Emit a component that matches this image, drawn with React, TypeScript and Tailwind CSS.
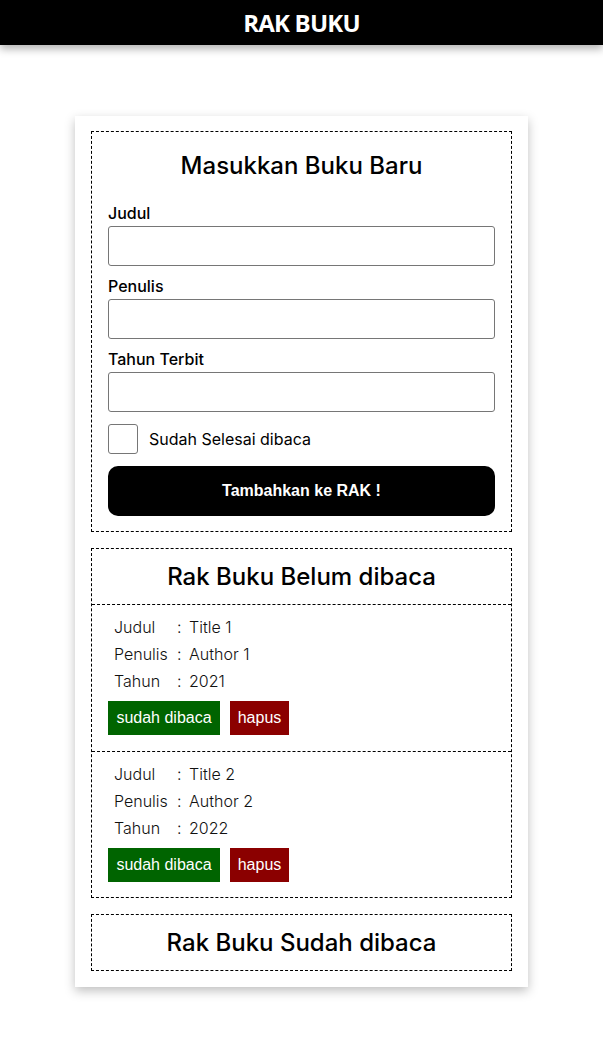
import React from "react";

const books = [
  { title: "Title 1", author: "Author 1", year: "2021" },
  { title: "Title 2", author: "Author 2", year: "2022" },
];

function Field({ label }: { label: string }) {
  return (
    <div className="flex flex-col">
      <label className="text-[16px] leading-[24px] font-medium">{label}</label>
      <input
        type="text"
        className="mt-px h-10 w-full rounded-[3px] border border-[#767676] bg-white px-2"
      />
    </div>
  );
}

function BookItem({ title, author, year }: { title: string; author: string; year: string }) {
  const rows: [string, string][] = [
    ["Judul", title],
    ["Penulis", author],
    ["Tahun", year],
  ];
  return (
    <div className="border-t border-dashed border-black px-4 pt-[8px] pb-4 last:pb-[15px]">
      <div className="pl-[6px]">
        {rows.map(([k, v]) => (
          <div key={k} className="flex h-[27px] items-center text-[16px] font-light text-[#111]">
            <span className="w-[63px]">{k}</span>
            <span className="w-3">:</span>
            <span>{v}</span>
          </div>
        ))}
      </div>
      <div className="mt-[7px] flex gap-[10px] font-['Liberation_Sans',Arial,sans-serif] text-[16px] text-white">
        <button className="flex h-[34px] w-[112px] items-center justify-center bg-[#006400]">sudah dibaca</button>
        <button className="flex h-[34px] w-[59px] items-center justify-center bg-[#8b0000]">hapus</button>
      </div>
    </div>
  );
}

export default function App() {
  return (
    <div className="min-h-[1057px] bg-white font-['Inter','Noto_Sans',sans-serif] text-black">
      <header className="flex h-[45px] items-center justify-center bg-black shadow-[0_4px_8px_rgba(0,0,0,0.3)]">
        <h1 className="font-['Open_Sans',sans-serif] text-[24px] font-bold tracking-[-0.8px] text-white">RAK BUKU</h1>
      </header>

      <main className="flex justify-center pt-[71px] pb-[70px]">
        <div className="flex w-[453px] flex-col gap-4 bg-white px-4 pt-[15px] pb-[16px] shadow-[0_4px_10px_rgba(0,0,0,0.25)]">
          <section className="border border-dashed border-black px-4 pt-4 pb-[15px]">
            <h2 className="text-center text-[24px] leading-[36px] font-medium">Masukkan Buku Baru</h2>
            <div className="mt-[17px] flex flex-col gap-2">
              <Field label="Judul" />
              <Field label="Penulis" />
              <Field label="Tahun Terbit" />
            </div>
            <div className="mt-3 flex items-center">
              <input type="checkbox" className="h-[30px] w-[30px] appearance-none rounded-[3px] border border-[#767676] bg-white" />
              <span className="ml-[11px] text-[16px]">Sudah Selesai dibaca</span>
            </div>
            <button className="mt-3 flex h-[50px] w-full items-center justify-center rounded-[10px] bg-black font-['Liberation_Sans',Arial,sans-serif] text-[16px] font-bold text-white">
              Tambahkan ke RAK !
            </button>
          </section>

          <section className="border border-dashed border-black">
            <h2 className="flex h-[55px] items-center justify-center text-[24px] font-medium">Rak Buku Belum dibaca</h2>
            {books.map((b) => (
              <BookItem key={b.title} {...b} />
            ))}
          </section>

          <section className="border border-dashed border-black">
            <h2 className="flex h-[55px] items-center justify-center text-[24px] font-medium">Rak Buku Sudah dibaca</h2>
          </section>
        </div>
      </main>
    </div>
  );
}
